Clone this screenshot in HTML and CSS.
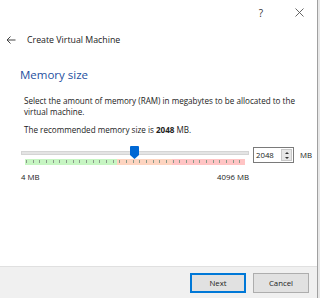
FILE: index.html
```html
<!DOCTYPE html>
<html lang="en">
  <head>
    <meta charset="UTF-8" />
    <meta name="viewport" content="width=device-width, initial-scale=1.0" />
    <title>Create Virtual Machine</title>
    <link rel="stylesheet" href="styles.css">
  </head>
  <body>
    <div class="dialog">
      <div class="titlebar">
        <span class="help">?</span>
        <svg class="close" width="9" height="9" viewBox="0 0 9 9">
          <path d="M0.5 0.5l8 8M8.5 0.5l-8 8" fill="none" stroke="#555" stroke-width="0.9"/>
        </svg>
      </div>

      <div class="header">
        <svg class="back" width="10" height="8" viewBox="0 0 10 8">
          <path d="M9.5 4H1M4.5 0.5L1 4l3.5 3.5" fill="none" stroke="#444" stroke-width="1"/>
        </svg>
        <span>Create Virtual Machine</span>
      </div>

      <div class="content">
        <h2>Memory size</h2>
        <p class="desc">Select the amount of memory (RAM) in megabytes to be allocated to the virtual machine.</p>
        <p class="recommend">The recommended memory size is <b>2048</b> MB.</p>

        <div class="memory-row">
          <div class="slider">
            <div class="track">
              <div class="thumb"></div>
            </div>
            <div class="ticks"></div>
            <div class="limits">
              <span>4 MB</span>
              <span>4096 MB</span>
            </div>
          </div>
          <div class="spinbox">
            <span class="value">2048</span>
            <div class="arrows">
              <span class="up"></span>
              <span class="down"></span>
            </div>
          </div>
          <span class="unit">MB</span>
        </div>
      </div>

      <div class="footer">
        <button class="default">Next</button>
        <button>Cancel</button>
      </div>
    </div>
    <div class="edge"></div>
  </body>
</html>
```

FILE: styles.css
```css
body {
  margin: 0;
  width: 320px;
  height: 298px;
  display: flex;
  font-family: "Open Sans", "Noto Sans", sans-serif;
  color: #222;
  background-color: #fff;
  overflow: hidden;
}

.dialog {
  width: 317px;
  height: 298px;
  display: flex;
  flex-direction: column;
  border-right: 1px solid #a0a0a0;
  background-color: #fff;
}

.edge {
  flex: 1;
  background-color: #e8e8e8;
}

.titlebar {
  height: 25px;
  display: flex;
  justify-content: flex-end;
  align-items: center;
  font-size: 10px;
  color: #333;
}

.help {
  width: 12px;
  text-align: center;
  margin-right: 28px;
}

.close {
  margin-right: 13px;
}

.header {
  height: 30px;
  display: flex;
  align-items: center;
  padding-left: 6px;
  font-size: 8.8px;
  color: #222;
}

.back {
  margin-right: 11px;
}

.content {
  padding: 0 6px 0 20px;
}

h2 {
  margin: 12px 0 0;
  font-size: 11.5px;
  font-weight: normal;
  color: #1e50a0;
}

.desc {
  margin: 13px 0 0 4px;
  font-size: 8.1px;
  line-height: 11px;
}

.recommend {
  margin: 7px 0 0 4px;
  font-size: 8.1px;
  line-height: 11px;
}

.memory-row {
  display: flex;
  align-items: flex-start;
  margin-top: 10px;
}

.slider {
  flex-shrink: 0;
  width: 228px;
  margin-left: 1px;
}

.track {
  position: relative;
  height: 2px;
  margin-top: 6px;
  background-color: #e4e4e4;
  border: 1px solid #d4d4d4;
}

.thumb {
  position: absolute;
  left: 108px;
  top: -6px;
  width: 9px;
  height: 13px;
  background-color: #0068d4;
  clip-path: polygon(0 0, 100% 0, 100% 70%, 50% 100%, 0 70%);
  border-radius: 1px;
}

.ticks {
  height: 6px;
  margin: 4px 4px 0 4px;
  background-image:
    repeating-linear-gradient(to right, transparent 0, transparent 1px, #8a9a8a 1px, #8a9a8a 2px, transparent 2px, transparent 6.67px),
    linear-gradient(to right, #c6f5c2 0, #c6f5c2 42%, #fdd4c0 42%, #fdd4c0 67%, #ffc4c4 67%);
  background-size: 100% 3px, 100% 100%;
  background-position: 0 1px, 0 0;
  background-repeat: no-repeat;
}

.limits {
  display: flex;
  justify-content: space-between;
  margin-top: 7px;
  font-size: 7.8px;
}

.spinbox {
  flex-shrink: 0;
  display: flex;
  width: 39px;
  height: 14px;
  margin-left: 4px;
  margin-top: 2px;
  border: 1px solid #7a7a7a;
  background-color: #fff;
}

.value {
  flex: 1;
  font-size: 7.8px;
  line-height: 14px;
  padding-left: 2px;
}

.arrows {
  width: 9px;
  margin: 1px;
  display: flex;
  flex-direction: column;
  border: 1px solid #c8c8c8;
  background-color: #e6e6e6;
}

.arrows span {
  flex: 1;
  display: flex;
  align-items: center;
  justify-content: center;
}

.up::after {
  content: "";
  border-left: 2px solid transparent;
  border-right: 2px solid transparent;
  border-bottom: 2px solid #333;
}

.down::after {
  content: "";
  border-left: 2px solid transparent;
  border-right: 2px solid transparent;
  border-top: 2px solid #333;
}

.unit {
  margin-left: 6px;
  margin-top: 5px;
  font-size: 7.8px;
}

.footer {
  margin-top: auto;
  height: 25px;
  display: flex;
  justify-content: flex-end;
  align-items: flex-start;
  gap: 7px;
  padding: 6px 8px 0 0;
  background-color: #f0f0f0;
  border-top: 1px solid #e0e0e0;
}

button {
  width: 56px;
  height: 20px;
  padding: 0;
  font-family: "Open Sans", "Noto Sans", sans-serif;
  font-size: 7.8px;
  color: #222;
  background-color: #e1e1e1;
  border: 1px solid #adadad;
}

button.default {
  border: 2px solid #0078d7;
}
```
